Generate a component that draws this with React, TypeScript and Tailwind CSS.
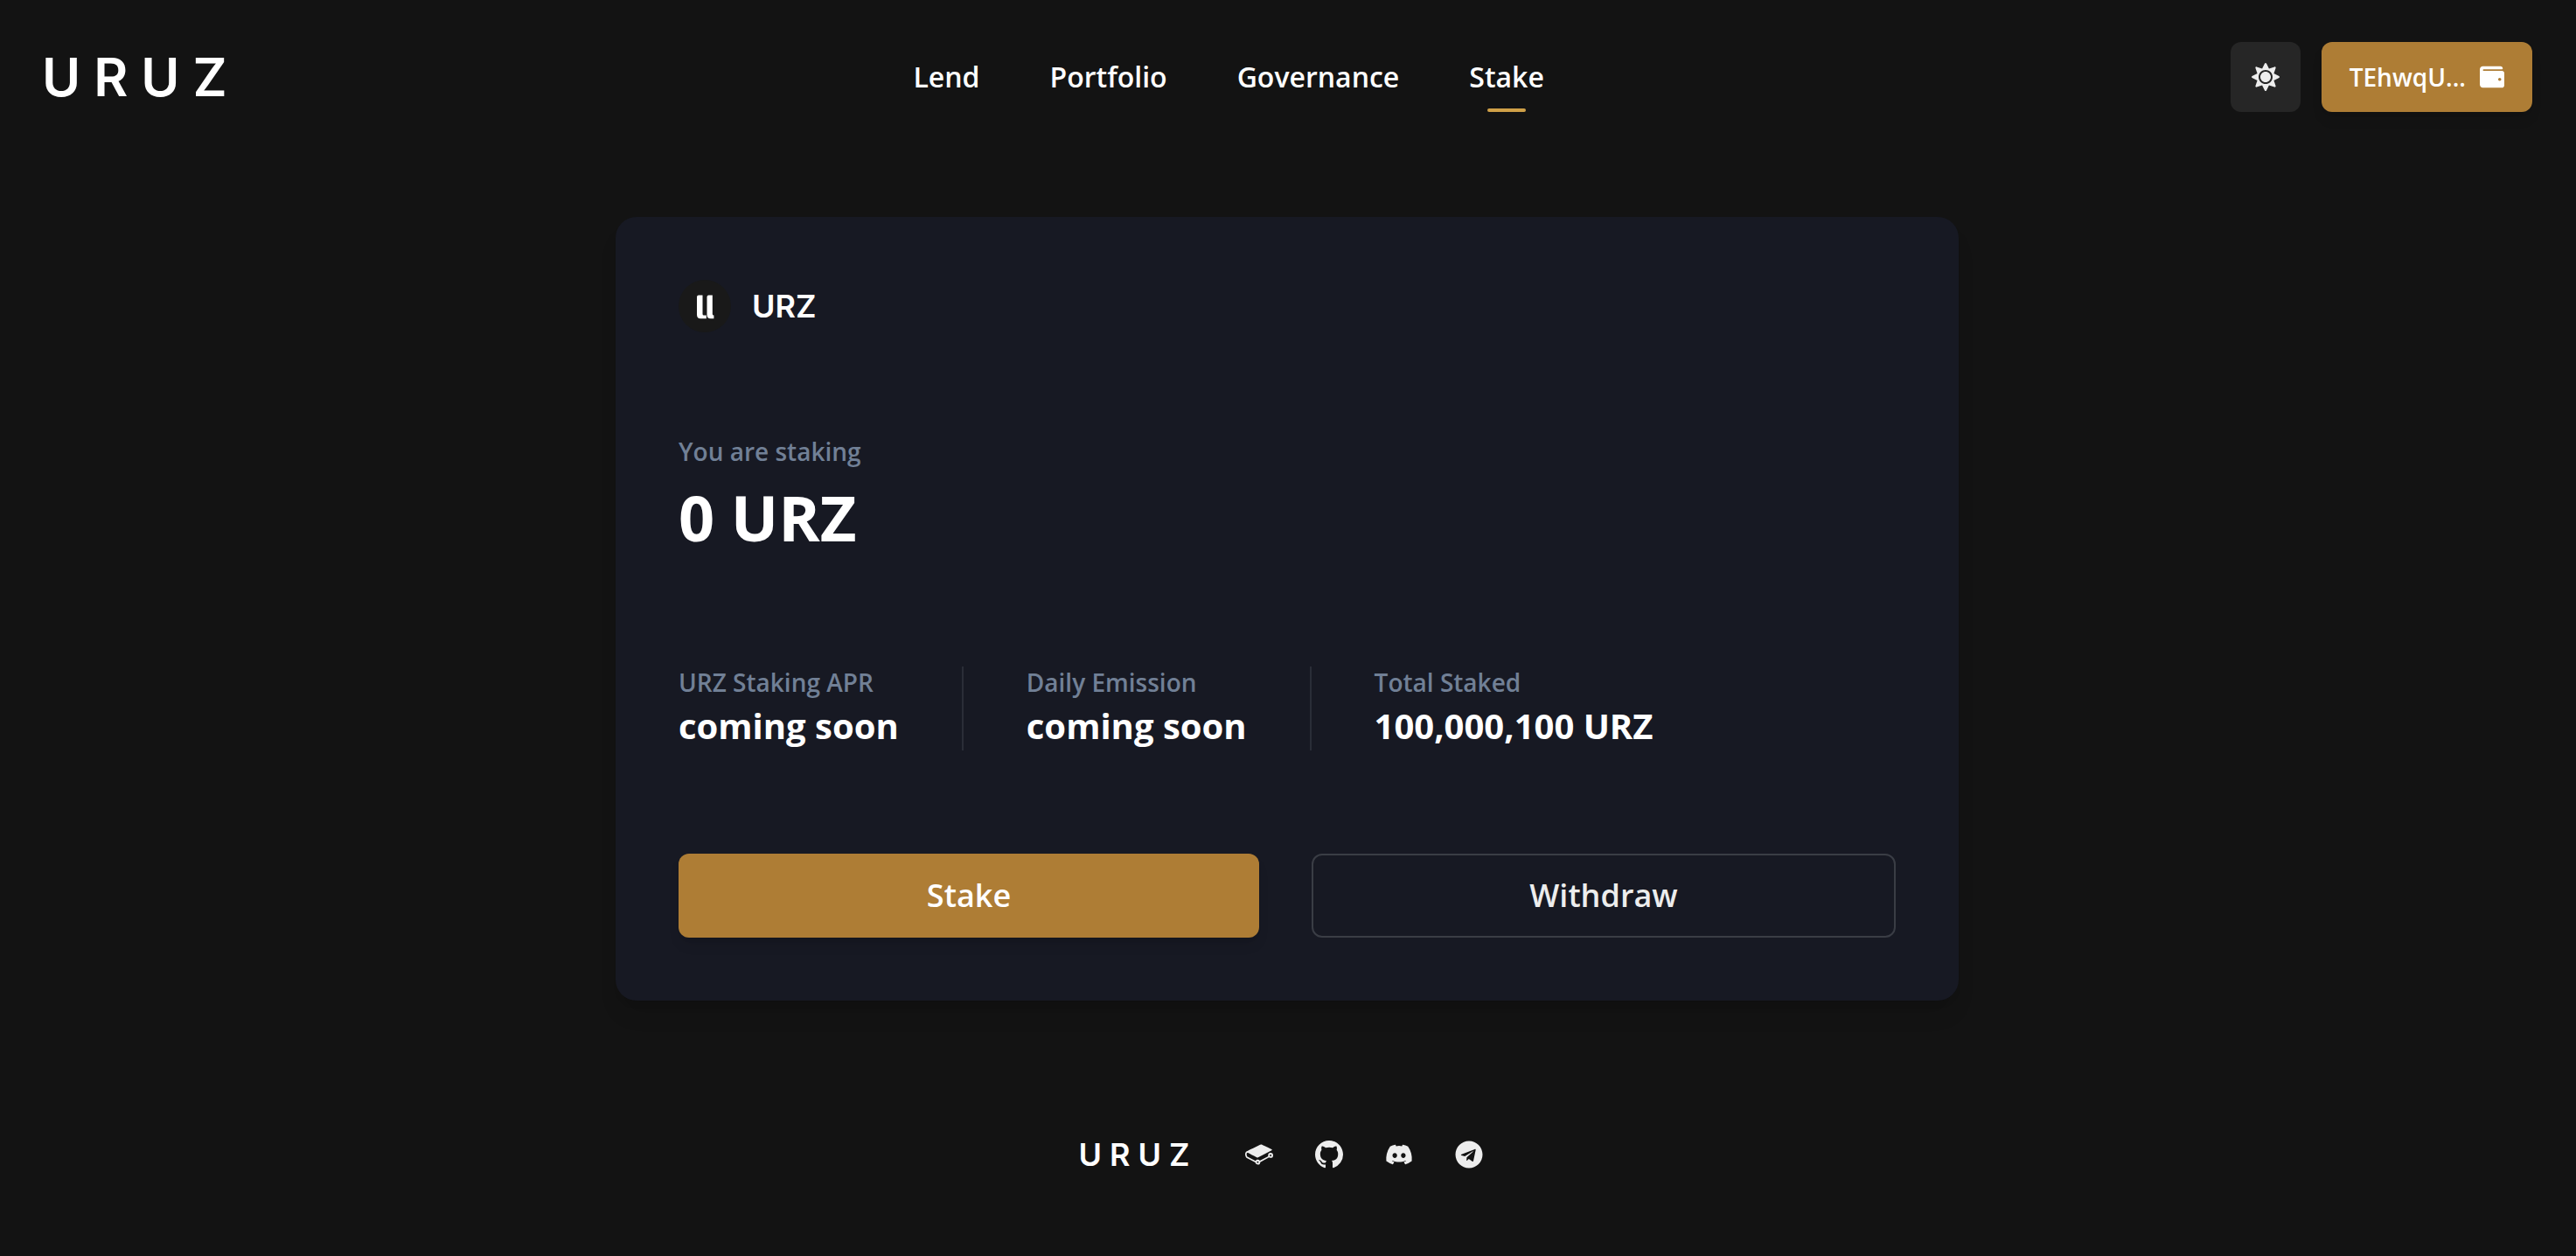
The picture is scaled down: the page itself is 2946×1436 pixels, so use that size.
import React from "react";
import { FaDiscord, FaSun, FaTelegram, FaWallet } from "react-icons/fa";
import { BsGithub } from "react-icons/bs";

const navLinks = [
  { label: "Lend", active: false },
  { label: "Portfolio", active: false },
  { label: "Governance", active: false },
  { label: "Stake", active: true },
];

const stats = [
  { label: "URZ Staking APR", value: "coming soon" },
  { label: "Daily Emission", value: "coming soon" },
  { label: "Total Staked", value: "100,000,100 URZ" },
];

function GitbookIcon({ className }: { className?: string }) {
  return (
    <svg viewBox="0 0 24 24" fill="currentColor" className={className} aria-hidden="true">
      <path d="M10.802 17.77a.703.703 0 11-.002 1.406.703.703 0 01.002-1.406m11.024-4.347a.703.703 0 11.001-1.406.703.703 0 01-.001 1.406m0-2.876a2.176 2.176 0 00-2.174 2.174c0 .233.039.465.115.691l-7.181 3.823a2.165 2.165 0 00-1.784-.937c-.829 0-1.584.475-1.95 1.216l-6.451-3.402c-.682-.358-1.192-1.48-1.138-2.502.028-.533.212-.947.493-1.107.178-.1.392-.092.62.027l.042.023c1.71.9 7.304 3.847 7.54 3.956.363.169.565.237 1.185-.057l11.564-6.014c.17-.064.368-.227.368-.474 0-.342-.354-.477-.355-.477-.658-.315-1.669-.788-2.655-1.25-2.108-.987-4.497-2.105-5.546-2.655-.906-.474-1.635-.074-1.765.006l-.252.125C7.78 6.048 1.46 9.178 1.1 9.397.457 9.789.058 10.57.006 11.539c-.08 1.537.703 3.14 1.824 3.727l6.822 3.518a2.175 2.175 0 002.15 1.862 2.177 2.177 0 002.173-2.14l7.514-4.073c.38.298.853.461 1.337.461A2.176 2.176 0 0024 12.72a2.176 2.176 0 00-2.174-2.174" />
    </svg>
  );
}

function TokenMark() {
  return (
    <svg viewBox="0 0 60 60" className="size-15" aria-hidden="true">
      <circle cx="30" cy="30" r="30" fill="#191919" />
      <path d="M21 19.500q0-2 2-2h4.500v21.500q0 1.500 1.500 1.500h2.800v3.800h-6.500q-4.300 0-4.300-4.500z" fill="#fff" />
      <path d="M32.500 19.500q0-2 2-2h4.300v21.500q0 1.500 1.600 1.500v3.800h-3.600q-4.300 0-4.300-4.500z" fill="#fff" />
    </svg>
  );
}

const socials = [
  { label: "GitBook", icon: <GitbookIcon className="size-8" /> },
  { label: "GitHub", icon: <BsGithub className="size-8" /> },
  { label: "Discord", icon: <FaDiscord className="size-8" /> },
  { label: "Telegram", icon: <FaTelegram className="size-8" /> },
];

function Header() {
  return (
    <header className="flex items-center justify-between px-12 py-12">
      <a
        href="#"
        aria-label="URUZ"
        className="flex h-20 items-center gap-[15px] font-['Inter',sans-serif] text-[60px] leading-none font-semibold"
      >
        <span>U</span>
        <span>R</span>
        <span>U</span>
        <span>Z</span>
      </a>
      <nav className="flex gap-20">
        {navLinks.map(({ label, active }) => (
          <a key={label} href="#" className="relative flex h-20 items-center text-[32px] font-semibold">
            {label}
            {active && (
              <span className="absolute inset-x-0 bottom-0 mx-auto h-1 w-11 rounded-sm bg-[#cfa048]" />
            )}
          </a>
        ))}
      </nav>
      <div className="flex gap-6">
        <button
          aria-label="Toggle color mode"
          className="flex size-20 items-center justify-center rounded-xl bg-[#262626] text-[#ededed]"
        >
          <FaSun className="size-8" />
        </button>
        <button className="flex h-20 items-center gap-4 rounded-xl bg-[#ae7d35] px-8 text-[28px] font-semibold shadow-lg">
          TEhwqU...
          <FaWallet className="size-7" />
        </button>
      </div>
    </header>
  );
}

function StakeCard() {
  return (
    <section className="mx-auto w-full max-w-[1536px] rounded-3xl bg-[#171923] p-18 shadow-xl">
      <div className="flex items-center gap-6">
        <TokenMark />
        <h1 className="font-['Inter',sans-serif] text-[36px] leading-none font-semibold">URZ</h1>
      </div>
      <div className="mt-28">
        <p className="text-[28px] leading-[48px] font-semibold text-[#718096]">You are staking</p>
        <p className="text-[72px] leading-[102px] font-bold">0 URZ</p>
      </div>
      <dl className="mt-30 flex">
        {stats.map(({ label, value }) => (
          <div
            key={label}
            className="mr-18 border-r-2 border-[#2a2d37] pr-18 last:mr-0 last:border-r-0 last:pr-0"
          >
            <dt className="text-[28px] leading-9 font-semibold text-[#718096]">{label}</dt>
            <dd className="mt-1 text-[40px] leading-14 font-bold">{value}</dd>
          </div>
        ))}
      </dl>
      <div className="mt-[118px] grid grid-cols-[664fr_668fr] gap-15 text-[36px] font-semibold">
        <button className="h-24 rounded-xl bg-[#ae7d35] shadow-lg">Stake</button>
        <button className="h-24 rounded-xl border-2 border-[#3a3d45] text-[#ededed]">Withdraw</button>
      </div>
    </section>
  );
}

function Footer() {
  return (
    <footer className="mt-36 flex items-center justify-center gap-16 pt-3.5 pb-24">
      <a
        href="#"
        aria-label="URUZ"
        className="flex items-center gap-[9px] font-['Inter',sans-serif] text-[36px] leading-none font-semibold"
      >
        <span>U</span>
        <span>R</span>
        <span>U</span>
        <span>Z</span>
      </a>
      <div className="flex gap-12 pr-3.5">
        {socials.map(({ label, icon }) => (
          <a key={label} href="#" aria-label={label} className="text-[#ededed]">
            {icon}
          </a>
        ))}
      </div>
    </footer>
  );
}

export default function App() {
  return (
    <div className="min-h-screen bg-[#131313] pr-0.5 font-['Open_Sans',sans-serif] text-white">
      <Header />
      <main className="pt-18">
        <StakeCard />
      </main>
      <Footer />
    </div>
  );
}
